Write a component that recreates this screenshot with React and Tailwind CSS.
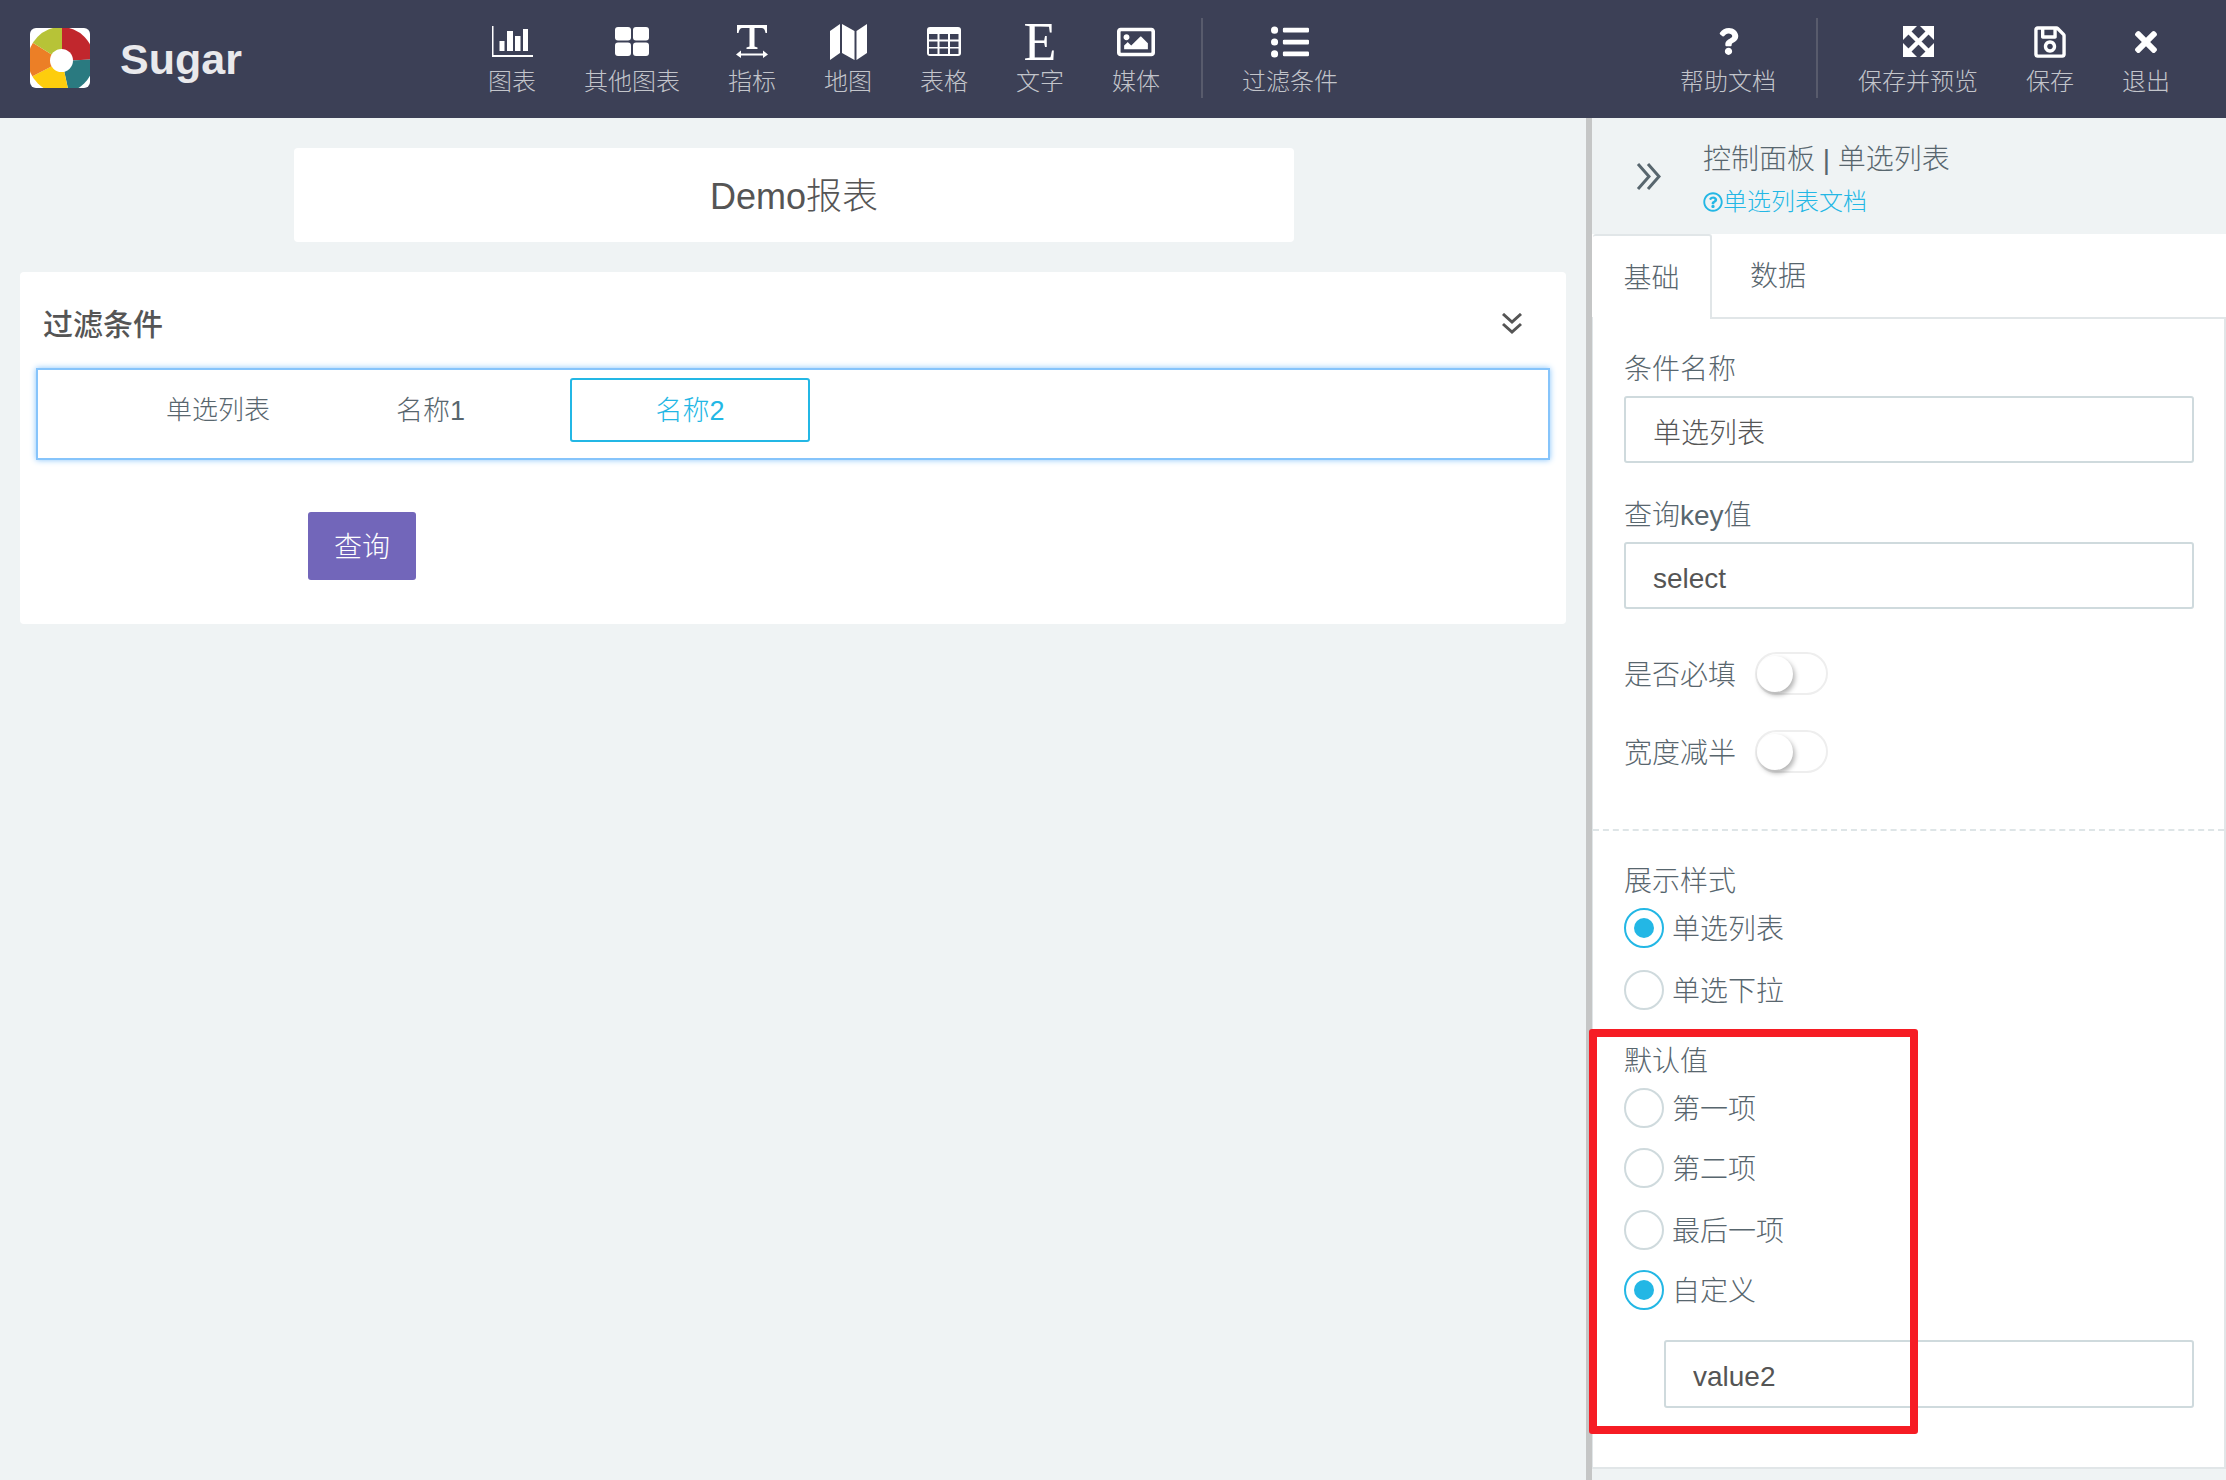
import { FaRegImage, FaListUl, FaQuestion, FaRegSave, FaTimes, FaRegQuestionCircle } from 'react-icons/fa';

const Logo = () => (
    <svg width="60" height="60" viewBox="0 0 60 60" className="rounded-md bg-white">
        <defs>
            <clipPath id="logo-clip"><circle cx="31" cy="32" r="33" /></clipPath>
        </defs>
        <g clipPath="url(#logo-clip)">
            <polygon points="32,33 32,-5 70,-5 70,31" fill="#c1272d" />
            <polygon points="32,33 70,31 70,70 40,70" fill="#2a7a80" />
            <polygon points="32,33 40,70 -5,70 -5,52" fill="#fdcd0d" />
            <polygon points="32,33 -5,52 -5,10" fill="#ec7f26" />
            <polygon points="32,33 -5,10 -5,-5 32,-5" fill="#b7c337" />
        </g>
        <circle cx="31.5" cy="32.5" r="11.5" fill="#fff" />
    </svg>
);

const BarIcon = () => (
    <svg width="41" height="31" viewBox="0 0 41 31" fill="#fff">
        <path d="M0 0h1.500v29H41v2H0z" />
        <rect x="7.500" y="15" width="5" height="10" />
        <rect x="15" y="5" width="6" height="20" />
        <rect x="23" y="10" width="5.500" height="15" />
        <rect x="31" y="3" width="5" height="22" />
    </svg>
);

const GridIcon = () => (
    <svg width="34" height="29" viewBox="0 0 34 29" fill="#fff">
        <rect x="0" y="0" width="16" height="13.500" rx="3" />
        <rect x="18" y="0" width="16" height="13.500" rx="3" />
        <rect x="0" y="15.500" width="16" height="13.500" rx="3" />
        <rect x="18" y="15.500" width="16" height="13.500" rx="3" />
    </svg>
);

const TextWidthIcon = () => (
    <svg width="32" height="33" viewBox="0 0 32 33" fill="#fff">
        <path d="M1 0h30v8h-1.500c-.5-3-1.500-5-4-5H18.500v18.500l3 1V24h-11v-1.500l3-1V3H6.500c-2.500 0-3.500 2-4 5H1z" />
        <path d="M0 29.500l5-4v3h22v-3l5 4-5 3.500v-2.500H5V33z" />
    </svg>
);

const MapIcon = () => (
    <svg width="37" height="36" viewBox="0 0 37 36" fill="#fff">
        <polygon points="0,7 10,0 10,29 0,36" />
        <polygon points="12,0 24.500,7 24.500,36 12,29" />
        <polygon points="26.500,7 37,0 37,29 26.500,36" />
    </svg>
);

const TableIcon = () => (
    <svg width="34" height="29" viewBox="0 0 34 29">
        <rect width="34" height="29" rx="3" fill="#fff" />
        {[7, 14.500, 21.500].map(y =>
            [2, 12.500, 23].map(x => (
                <rect key={`${x}-${y}`} x={x} y={y} width="8.500" height="5.500" fill="#3c4056" />
            ))
        )}
    </svg>
);

const ExpandIcon = () => (
    <svg width="31" height="31" viewBox="0 0 31 31" fill="#fff" stroke="none">
        <polygon points="0,0 14,0 0,14" />
        <polygon points="31,0 17,0 31,14" />
        <polygon points="0,31 14,31 0,17" />
        <polygon points="31,31 17,31 31,17" />
        <path d="M5 5l21 21M26 5L5 26" stroke="#fff" strokeWidth="4.500" />
    </svg>
);

const DoubleRight = () => (
    <svg width="26" height="27" viewBox="0 0 26 27" fill="none" stroke="#58666e" strokeWidth="3">
        <path d="M2 1l11 12.500L2 26M12 1l11 12.500L12 26" />
    </svg>
);

const DoubleDown = () => (
    <svg width="20" height="21" viewBox="0 0 20 21" fill="none" stroke="#555555" strokeWidth="3">
        <path d="M1 1l9 8 9-8M1 11l9 8 9-8" />
    </svg>
);

const NavItem = ({ icon, label }) => (
    <div className="flex flex-col items-center px-6">
        <div className="mt-[23px] flex h-[37px] items-center justify-center text-white">{icon}</div>
        <span className="mt-2 whitespace-nowrap text-[24px] leading-7 text-[#c3c5cb]">{label}</span>
    </div>
);

const Radio = ({ label, checked, className }) => (
    <div className={`flex h-10 items-center ${className}`}>
        {checked ? (
            <span className="flex h-10 w-10 items-center justify-center rounded-full border-2 border-[#23b7e5]">
                <span className="h-5 w-5 rounded-full bg-[#23b7e5]" />
            </span>
        ) : (
            <span className="h-10 w-10 rounded-full border-2 border-[#cfdadd]" />
        )}
        <span className="ml-2 pt-[3px] text-[28px] text-[#58666e]">{label}</span>
    </div>
);

const Toggle = ({ label, className }) => (
    <div className={`flex h-[43px] items-center ${className}`}>
        <span className="w-[131px] pt-1 text-[28px] text-[#58666e]">{label}</span>
        <span className="flex h-[43px] w-[73px] items-center rounded-full border-2 border-[#eeeeee] bg-white">
            <span className="h-9 w-9 rounded-full bg-white shadow-[2px_3px_5px_rgba(0,0,0,0.3)]" />
        </span>
    </div>
);

const TextInput = ({ value, className }) => (
    <input
        readOnly
        value={value}
        className={`block rounded-[3px] border-2 border-[#cfdadd] bg-white pl-[27px] text-[28px] text-[#555555] outline-none ${className}`}
    />
);

const Label = ({ children, className }) => (
    <div className={`h-10 pt-0.5 text-[28px] leading-10 text-[#58666e] ${className}`}>{children}</div>
);

export default function App() {
    return (
        <div className="flex h-[1480px] w-[2226px] flex-col overflow-hidden bg-[#eff3f4] font-light font-['Liberation_Sans','Noto_Sans_CJK_SC',sans-serif]">
            <header className="flex h-[118px] shrink-0 items-start bg-[#3c4056]">
                <div className="ml-[30px] mt-7"><Logo /></div>
                <div className="ml-[30px] mt-[33px] w-[124px] text-[43px] font-bold leading-[52px] text-[#e9e9ec]">Sugar</div>
                <nav className="ml-[220px] flex">
                    <NavItem icon={<BarIcon />} label="图表" />
                    <NavItem icon={<GridIcon />} label="其他图表" />
                    <NavItem icon={<TextWidthIcon />} label="指标" />
                    <NavItem icon={<MapIcon />} label="地图" />
                    <NavItem icon={<TableIcon />} label="表格" />
                    <NavItem icon={<span className="font-['Liberation_Serif',serif] text-[54px] leading-none">E</span>} label="文字" />
                    <NavItem icon={<FaRegImage size={38} />} label="媒体" />
                    <div className="ml-[17px] mr-[15px] mt-[18px] h-20 w-0.5 bg-[#585b6c]" />
                    <NavItem icon={<FaListUl size={38} />} label="过滤条件" />
                </nav>
                <div className="ml-auto mr-8 flex">
                    <NavItem icon={<FaQuestion size={27} />} label="帮助文档" />
                    <div className="mx-4 mt-[18px] h-20 w-0.5 bg-[#585b6c]" />
                    <NavItem icon={<ExpandIcon />} label="保存并预览" />
                    <NavItem icon={<FaRegSave size={36} />} label="保存" />
                    <NavItem icon={<FaTimes size={32} />} label="退出" />
                </div>
            </header>

            <div className="flex flex-1">
                <main className="w-[1586px] shrink-0 pl-5 pt-[30px]">
                    <div className="ml-[274px] flex h-[94px] w-[1000px] items-center justify-center rounded bg-white pt-1 text-[36px] text-[#555555]">
                        Demo报表
                    </div>
                    <section className="mt-[30px] h-[352px] w-[1546px] rounded bg-white pt-[30px]">
                        <div className="flex h-[42px] items-center justify-between pl-[23px] pr-[44px]">
                            <h2 className="pt-[3px] text-[30px] font-medium leading-[42px] text-[#555555]">过滤条件</h2>
                            <DoubleDown />
                        </div>
                        <div className="ml-4 mt-6 flex h-[92px] w-[1514px] items-start border-2 border-[#86c4fb] pl-[128px] pt-2 shadow-[0_0_6px_rgba(134,196,251,1)]">
                            <span className="flex h-16 items-center text-[26px] text-[#58666e]">单选列表</span>
                            <span className="ml-[126px] flex h-16 items-center pt-[3px] text-[27px] text-[#58666e]">名称1</span>
                            <span className="ml-[105px] flex h-16 w-[240px] items-center justify-center rounded-[3px] border-2 border-[#23b7e5] pt-[3px] text-[27px] text-[#23b7e5]">名称2</span>
                        </div>
                        <button className="ml-[288px] mt-[52px] flex h-[68px] w-[108px] items-center justify-center rounded-[3px] bg-[#7266ba] pt-1 text-[28px] text-white">
                            查询
                        </button>
                    </section>
                </main>

                <aside className="relative flex w-[640px] flex-col border-l-[6px] border-[#c5c6c6]">
                    <div className="flex h-[116px] shrink-0">
                        <div className="ml-[44px] mt-[45px]"><DoubleRight /></div>
                        <div className="ml-[41px] pt-6">
                            <div className="text-[28px] leading-9 text-[#58666e]">控制面板 | 单选列表</div>
                            <div className="mt-1.5 flex items-center text-[24px] leading-9 text-[#23b7e5]">
                                <FaRegQuestionCircle size={20} />
                                <span>单选列表文档</span>
                            </div>
                        </div>
                    </div>
                    <div className="flex h-[85px] shrink-0 border-b-2 border-[#e1e6e8] bg-white">
                        <div className="-mb-0.5 ml-px flex h-[85px] w-[119px] items-center justify-center rounded-t-[3px] border-r-2 border-t-2 border-[#e1e6e8] bg-white pt-[3px] text-[28px] text-[#58666e]">
                            基础
                        </div>
                        <div className="ml-[38px] flex items-center pt-[3px] text-[28px] text-[#58666e]">数据</div>
                    </div>
                    <div className="h-[1150px] shrink-0 border-b-2 border-l border-r-2 border-[#e1e6e8] bg-white pl-[31px] pt-[29px]">
                        <Label>条件名称</Label>
                        <TextInput value="单选列表" className="mt-2 h-[67px] w-[570px] pt-[3px]" />
                        <Label className="mt-[31px]">查询key值</Label>
                        <TextInput value="select" className="mt-2 h-[67px] w-[570px] pt-[6px]" />
                        <Toggle label="是否必填" className="mt-[43px]" />
                        <Toggle label="宽度减半" className="mt-[35px]" />
                        <div className="-ml-[31px] mt-14 border-t-2 border-dashed border-[#dee5e7]" />
                        <Label className="mt-[29px]">展示样式</Label>
                        <Radio checked label="单选列表" className="mt-2" />
                        <Radio label="单选下拉" className="mt-[22px]" />
                        <Label className="mt-[30px]">默认值</Label>
                        <Radio label="第一项" className="mt-2" />
                        <Radio label="第二项" className="mt-5" />
                        <Radio label="最后一项" className="mt-[22px]" />
                        <Radio checked label="自定义" className="mt-5" />
                        <TextInput value="value2" className="ml-10 mt-[30px] h-[68px] w-[530px] pt-[6px]" />
                    </div>
                    <div className="absolute -left-[3px] top-[911px] h-[405px] w-[329px] rounded-[3px] border-8 border-[#f61c24]" />
                </aside>
            </div>
        </div>
    );
}
